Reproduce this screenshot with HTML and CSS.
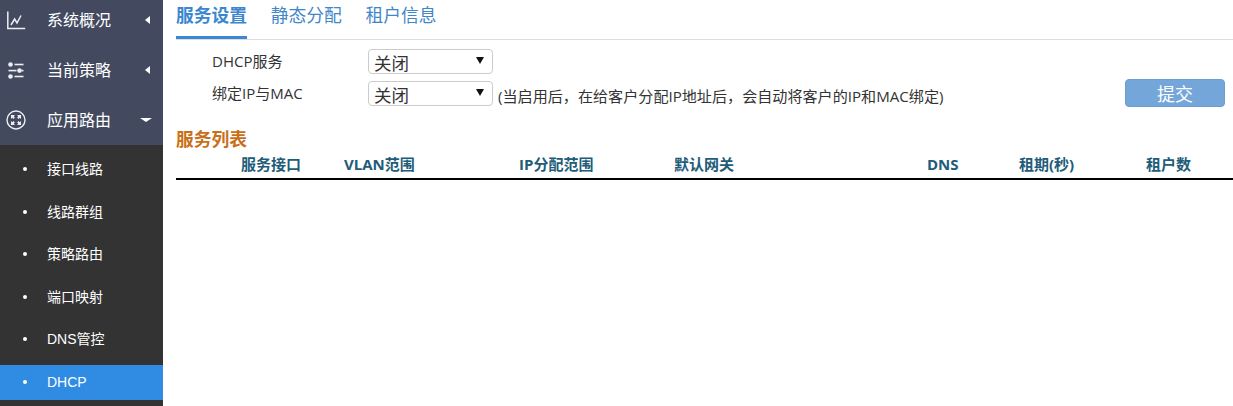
FILE: index.html
```html
<!DOCTYPE html>
<html lang="zh-CN">
<head>
<meta charset="utf-8">
<title>DHCP</title>
<link rel="stylesheet" href="styles.css">
</head>
<body>
<div class="app">
  <aside class="sidebar">
    <nav class="main-nav">
      <a class="nav-item"><svg class="nav-icon" viewBox="0 0 19 19"><path d="M.8.5v17h17.4M4 14l3.6-6 2.4 4 4-7.5" fill="none" stroke="#eceef1" stroke-width="1.5"/></svg><span class="nav-label">系统概况</span><i class="tri-left"></i></a>
      <a class="nav-item"><svg class="nav-icon" viewBox="0 0 19 19"><g fill="#eceef1"><circle cx="3.5" cy="3.5" r="2.3"/><rect x="7.5" y="2.7" width="9" height="1.6"/><rect x="1.5" y="8.8" width="8" height="1.6"/><circle cx="12.5" cy="9.6" r="2.3"/><rect x="14.5" y="8.8" width="2" height="1.6"/><circle cx="3.5" cy="15.5" r="2.3"/><rect x="7.5" y="14.7" width="9" height="1.6"/></g></svg><span class="nav-label">当前策略</span><i class="tri-left"></i></a>
      <a class="nav-item"><svg class="nav-icon nav-icon-big" viewBox="0 0 20 20"><circle cx="10" cy="10" r="9" fill="none" stroke="#eceef1" stroke-width="1.4"/><g fill="#eceef1"><path d="M5 5h4l-1.3 1.3 1.2 1.2-1.4 1.4-1.2-1.2L5 9z"/><path d="M15 5v4l-1.3-1.3-1.2 1.2-1.4-1.4 1.2-1.2L11 5z"/><path d="M5 15v-4l1.3 1.3 1.2-1.2 1.4 1.4-1.2 1.2L9 15z"/><path d="M15 15h-4l1.3-1.3-1.2-1.2 1.4-1.4 1.2 1.2L15 11z"/></g></svg><span class="nav-label">应用路由</span><i class="tri-down"></i></a>
    </nav>
    <ul class="sub-nav">
      <li class="sub-item">接口线路</li>
      <li class="sub-item">线路群组</li>
      <li class="sub-item">策略路由</li>
      <li class="sub-item">端口映射</li>
      <li class="sub-item">DNS管控</li>
      <li class="sub-item is-active">DHCP</li>
    </ul>
  </aside>
  <main class="content">
    <div class="tabs">
      <a class="tab is-active">服务设置</a>
      <a class="tab">静态分配</a>
      <a class="tab">租户信息</a>
    </div>
    <div class="settings">
      <form class="form">
        <div class="form-row">
          <label class="form-label">DHCP服务</label>
          <span class="select-wrap"><select class="select"><option>关闭</option><option>开启</option></select></span>
        </div>
        <div class="form-row">
          <label class="form-label">绑定IP与MAC</label>
          <span class="select-wrap"><select class="select"><option>关闭</option><option>开启</option></select></span>
          <span class="hint">(当启用后，在给客户分配IP地址后，会自动将客户的IP和MAC绑定)</span>
        </div>
      </form>
      <button class="submit" type="button">提交</button>
    </div>
    <h2 class="section-title">服务列表</h2>
    <div class="table-head">
      <span>服务接口</span>
      <span>VLAN范围</span>
      <span>IP分配范围</span>
      <span>默认网关</span>
      <span>DNS</span>
      <span>租期(秒)</span>
      <span>租户数</span>
    </div>
  </main>
</div>
</body>
</html>
```
FILE: styles.css
```css
* { box-sizing: border-box; }
html, body { margin: 0; height: 100%; overflow: hidden; background: #fff; }
body { font-family: "Open Sans", "Noto Sans CJK SC", sans-serif; }
.app { display: flex; height: 406px; }

.sidebar { width: 163px; flex: none; background: #333; overflow: hidden; color: #fff; }
.main-nav { background: #434a5f; margin-top: -5px; }
.nav-item { display: flex; align-items: center; height: 50px; padding-left: 7px; }
.nav-icon { width: 19px; height: 19px; flex: none; }
.nav-icon-big { width: 20px; height: 20px; margin-left: -1px; }
.nav-label { margin-left: 21px; width: 92px; font-size: 16px; line-height: 24px; }
.tri-left { width: 0; height: 0; margin-left: 6px; border: 4px solid transparent; border-left: 0; border-right: 5px solid #fff; }
.tri-down { width: 0; height: 0; margin-left: 1px; border: 6px solid transparent; border-bottom: 0; border-top: 4px solid #fff; }

.sub-nav { list-style: none; margin: 0; padding: 7px 0 0; }
.sub-item { position: relative; height: 35px; margin-bottom: 7.5px; padding-left: 47px; font-family: "Liberation Sans", "Noto Sans CJK SC", sans-serif; font-size: 14px; line-height: 34px; }
.sub-item::before { content: ""; position: absolute; left: 23px; top: 15px; width: 4px; height: 4px; border-radius: 50%; background: #fff; }
.sub-item.is-active { background: #308be3; }

.content { flex: 1; min-width: 0; padding-left: 13px; }
.tabs { display: flex; gap: 23.75px; height: 40px; border-bottom: 1px solid #ddd; }
.tab { height: 39px; font-size: 17.75px; line-height: 30px; color: #3f87c9; border-bottom: 3px solid transparent; }
.tab.is-active { font-weight: 700; color: #3a87d0; border-bottom-color: #3a87d8; }

.settings { display: flex; justify-content: space-between; align-items: flex-start; }
.form { padding: 9px 0 0 36px; }
.form-row { display: flex; height: 32px; }
.form-label { width: 156px; font-size: 15px; line-height: 24px; color: #333; }
.select-wrap { position: relative; width: 125px; height: 25px; flex: none; }
.select-wrap::after { content: ""; position: absolute; right: 9px; top: 8px; border: 4px solid transparent; border-bottom: 0; border-top: 7px solid #111; pointer-events: none; }
.select { display: block; width: 100%; height: 100%; padding: 2px 0 0 5px; appearance: none; background: #fff; border: 1px solid #ccc; border-radius: 4px; font: 17.5px/22px "Noto Sans CJK SC", sans-serif; color: #333; }
.hint { margin-left: 5px; font-size: 15.1px; line-height: 30px; color: #333; white-space: nowrap; }
.submit { width: 100px; height: 28px; margin: 39px 8px 0 0; padding: 0; background: #74a6d9; border: 1px solid #6c9ed0; border-radius: 4px; color: #fff; font: 18px/24px "Noto Sans CJK SC", sans-serif; }

.section-title { margin: 13px 0 0; font-size: 17.75px; line-height: 27px; font-weight: 700; color: #c96f1a; }
.table-head { display: grid; grid-template-columns: 103px 175px 155px 253px 92px 127px 1fr; height: 27px; padding-left: 65px; border-bottom: 2px solid #000; font-size: 15px; line-height: 23px; font-weight: 700; color: #215c78; white-space: nowrap; }
```
